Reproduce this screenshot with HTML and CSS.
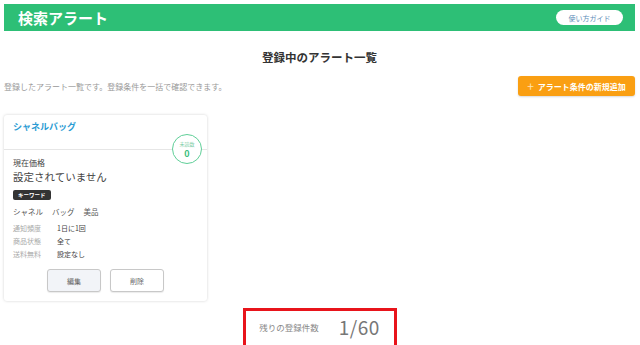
FILE: index.html
```html
<!DOCTYPE html>
<html lang="ja">
<head>
    <meta charset="UTF-8">
    <meta name="viewport" content="width=device-width, initial-scale=1.0">
    <link rel="stylesheet" href="styles.css">
    <title>検索アラート</title>
</head>
<body>
    <header class="topbar">
        <h1 class="topbar-title">検索アラート</h1>
        <a class="guide-button">使い方ガイド</a>
    </header>

    <h2 class="page-title">登録中のアラート一覧</h2>

    <div class="toolbar">
        <p class="lead">登録したアラート一覧です。登録条件を一括で確認できます。</p>
        <button class="add-button"><span class="plus">+</span>アラート条件の新規追加</button>
    </div>

    <div class="alert-list">
        <div class="alert-card">
            <div class="card-head">
                <p class="card-name">シャネルバッグ</p>
                <div class="unread">
                    <span class="unread-label">未読数</span>
                    <span class="unread-count">0</span>
                </div>
            </div>
            <div class="card-body">
                <p class="price-label">現在価格</p>
                <p class="price-value">設定されていません</p>
                <div class="tag-row"><span class="tag">キーワード</span></div>
                <p class="keywords"><span>シャネル</span><span>バッグ</span><span>美品</span></p>
                <dl class="conditions">
                    <dt>通知頻度</dt><dd>1日に1回</dd>
                    <dt>商品状態</dt><dd>全て</dd>
                    <dt>送料無料</dt><dd>設定なし</dd>
                </dl>
                <div class="card-actions">
                    <button class="card-button edit">編集</button>
                    <button class="card-button">削除</button>
                </div>
            </div>
        </div>
    </div>

    <div class="remaining">
        <span class="remaining-label">残りの登録件数</span>
        <span class="remaining-count">1/60</span>
    </div>
</body>
</html>
```

FILE: styles.css
```css
* {
    margin: 0;
    padding: 0;
    box-sizing: border-box;
}

body {
    font-family: 'Noto Sans CJK JP', 'Noto Sans', sans-serif;
    background-color: #fff;
    color: #333;
    padding: 4px 5px 0 4px;
    overflow: hidden;
}

/* Header bar */
.topbar {
    height: 27px;
    background-color: #2dbf76;
    display: flex;
    align-items: center;
    justify-content: space-between;
    padding: 0 12px 0 14px;
}

.topbar-title {
    font-size: 15px;
    font-weight: 700;
    color: #fff;
    line-height: 1;
}

.guide-button {
    background-color: #fff;
    color: #5d8cb8;
    font-size: 7px;
    border-radius: 8px;
    width: 67px;
    height: 15px;
    display: flex;
    align-items: center;
    justify-content: center;
}

.page-title {
    text-align: center;
    font-size: 11.5px;
    font-weight: 700;
    color: #333;
    margin-top: 18px;
    line-height: 16px;
}

/* Description + add button */
.toolbar {
    display: flex;
    justify-content: space-between;
    align-items: center;
    margin-top: 11px;
}

.lead {
    font-size: 8px;
    color: #999;
}

.add-button {
    background-color: #fa9f12;
    color: #fff;
    border: none;
    border-radius: 3px;
    font-family: inherit;
    font-size: 8px;
    font-weight: 700;
    width: 117px;
    height: 20px;
    display: flex;
    align-items: center;
    justify-content: center;
    gap: 4px;
    box-shadow: 0 1px 2px rgba(0, 0, 0, 0.15);
}

.add-button .plus {
    font-size: 12px;
    font-weight: 400;
    color: #ffe2b0;
    line-height: 1;
}

/* Alert card */
.alert-list {
    margin-top: 19px;
    display: flex;
}

.alert-card {
    width: 203px;
    background-color: #fff;
    border-radius: 3px;
    box-shadow: 0 0 3px rgba(0, 0, 0, 0.18);
}

.card-head {
    position: relative;
    height: 35px;
    padding: 6px 9px;
    border-bottom: 1px solid #e6e6e6;
}

.card-name {
    font-size: 9px;
    font-weight: 700;
    color: #2a9bd3;
    line-height: 12px;
}

.unread {
    position: absolute;
    right: 5px;
    top: 19px;
    width: 30px;
    height: 30px;
    border: 1px solid #5fcf98;
    border-radius: 50%;
    background-color: #fff;
    display: flex;
    flex-direction: column;
    align-items: center;
    justify-content: center;
    color: #3cbf80;
}

.unread-label {
    font-size: 5px;
    line-height: 8px;
    color: #7acca4;
}

.unread-count {
    font-size: 9px;
    font-weight: 700;
    line-height: 11px;
}

.card-body {
    padding: 7px 9px 9px;
}

.price-label {
    font-size: 8px;
    line-height: 12px;
    color: #444;
}

.price-value {
    font-size: 10.5px;
    line-height: 14px;
    color: #444;
    margin-top: 1px;
}

.tag-row {
    display: flex;
    margin-top: 6px;
}

.tag {
    background-color: #333;
    color: #fff;
    font-size: 5.5px;
    font-weight: 700;
    line-height: 10px;
    height: 10px;
    padding: 0 5px;
    border-radius: 2px;
}

.keywords {
    display: flex;
    gap: 9px;
    font-size: 7.5px;
    line-height: 12px;
    color: #555;
    margin-top: 6px;
}

.conditions {
    display: grid;
    grid-template-columns: 44px 1fr;
    font-size: 7px;
    line-height: 13px;
    margin-top: 4px;
}

.conditions dt {
    color: #aaa;
}

.conditions dd {
    color: #444;
}

.card-actions {
    display: flex;
    justify-content: center;
    gap: 9px;
    margin-top: 8px;
}

.card-button {
    width: 54px;
    height: 23px;
    border: 1px solid #c8c8c8;
    border-radius: 3px;
    background-color: #fff;
    font-family: inherit;
    font-size: 7px;
    color: #666;
    box-shadow: 0 1px 1px rgba(0, 0, 0, 0.08);
}

.card-button.edit {
    background-color: #f2f4f8;
}

/* Remaining count */
.remaining {
    width: 154px;
    height: 40px;
    margin: 7px auto 0;
    border: 3px solid #e8141b;
    display: flex;
    align-items: center;
    justify-content: center;
    gap: 20px;
    padding-bottom: 3px;
    color: #888;
}

.remaining-label {
    font-size: 8.5px;
    line-height: 12px;
}

.remaining-count {
    font-size: 19px;
    line-height: 22px;
    color: #777;
    letter-spacing: 0.5px;
}
```
